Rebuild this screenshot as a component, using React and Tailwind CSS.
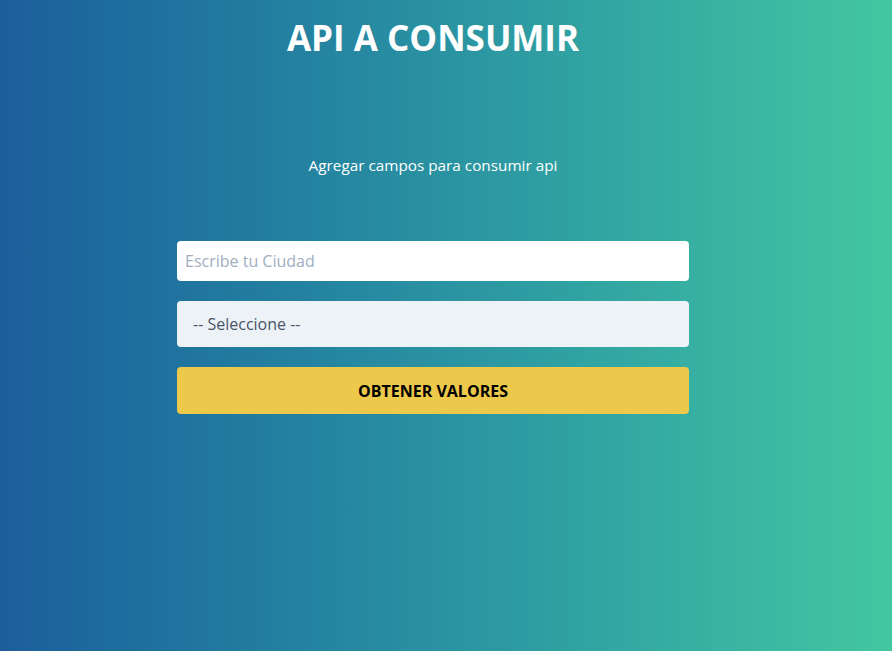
export default function App() {
  return (
    <div
      className="w-full h-[651px] bg-gradient-to-r from-[#1c5e9c] to-[#43c7a1] overflow-hidden"
      style={{ fontFamily: '"Open Sans", "Noto Sans", sans-serif' }}
    >
      <div className="w-[866px] flex flex-col items-center">
        <h1 className="mt-[14px] text-[35px] leading-[48px] font-bold text-white">
          API A CONSUMIR
        </h1>
        <p className="mt-[91px] text-[15.3px] leading-[24px] text-white">
          Agregar campos para consumir api
        </p>
        <div className="mt-[64px] w-[512px] flex flex-col">
          <input
            type="text"
            placeholder="Escribe tu Ciudad"
            className="h-[40px] w-full bg-white rounded-[4px] px-[8px] text-[16px] text-[#4a5568] placeholder:text-[#a0aec0] outline-none"
          />
          <div className="mt-[20px] h-[46px] w-full bg-[#edf2f7] rounded-[4px] px-[16px] flex items-center text-[16px] text-[#4a5568]">
            -- Seleccione --
          </div>
          <button className="mt-[20px] h-[47px] w-full bg-[#ecc94b] rounded-[4px] text-[16px] font-bold text-black">
            OBTENER VALORES
          </button>
        </div>
      </div>
    </div>
  );
}
